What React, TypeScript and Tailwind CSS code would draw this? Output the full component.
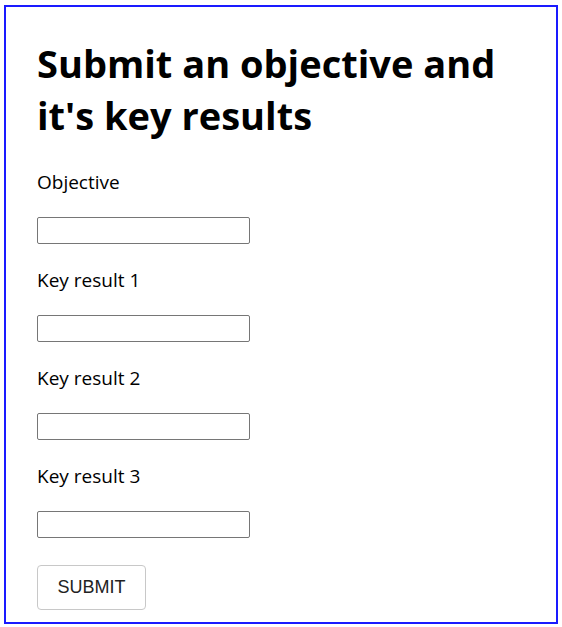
import React from "react";

const seg = { fontFamily: '"Open Sans", "Noto Sans", sans-serif' };

function Field({ label, last }: { label: string; last?: boolean }) {
  return (
    <div className="flex flex-col">
      <label className="h-[26px] mb-[22px] text-[19px] leading-[26px] text-black">{label}</label>
      <input
        type="text"
        className={`w-[213px] h-[27px] border border-[#767676] rounded-[2px] bg-white ${last ? "mb-[27px]" : "mb-[23px]"}`}
      />
    </div>
  );
}

export default function App() {
  return (
    <div className="pt-[5px] px-[4px] bg-white" style={seg}>
      <div className="w-[554px] h-[619px] border-2 border-[#1a1aff] px-[31px] pt-[30px] flex flex-col">
        <h1 className="text-[38px] font-bold leading-[52px] text-black mb-[28px]">
          Submit an objective and it's key results
        </h1>
        <Field label="Objective" />
        <Field label="Key result 1" />
        <Field label="Key result 2" />
        <Field label="Key result 3" last />
        <div>
          <button
            className="w-[109px] h-[45px] border border-[#c8c8c8] rounded-[4px] bg-white text-[18px] text-[#222] tracking-normal"
            style={{ fontFamily: '"Liberation Sans", Arial, sans-serif' }}
          >
            SUBMIT
          </button>
        </div>
      </div>
    </div>
  );
}
